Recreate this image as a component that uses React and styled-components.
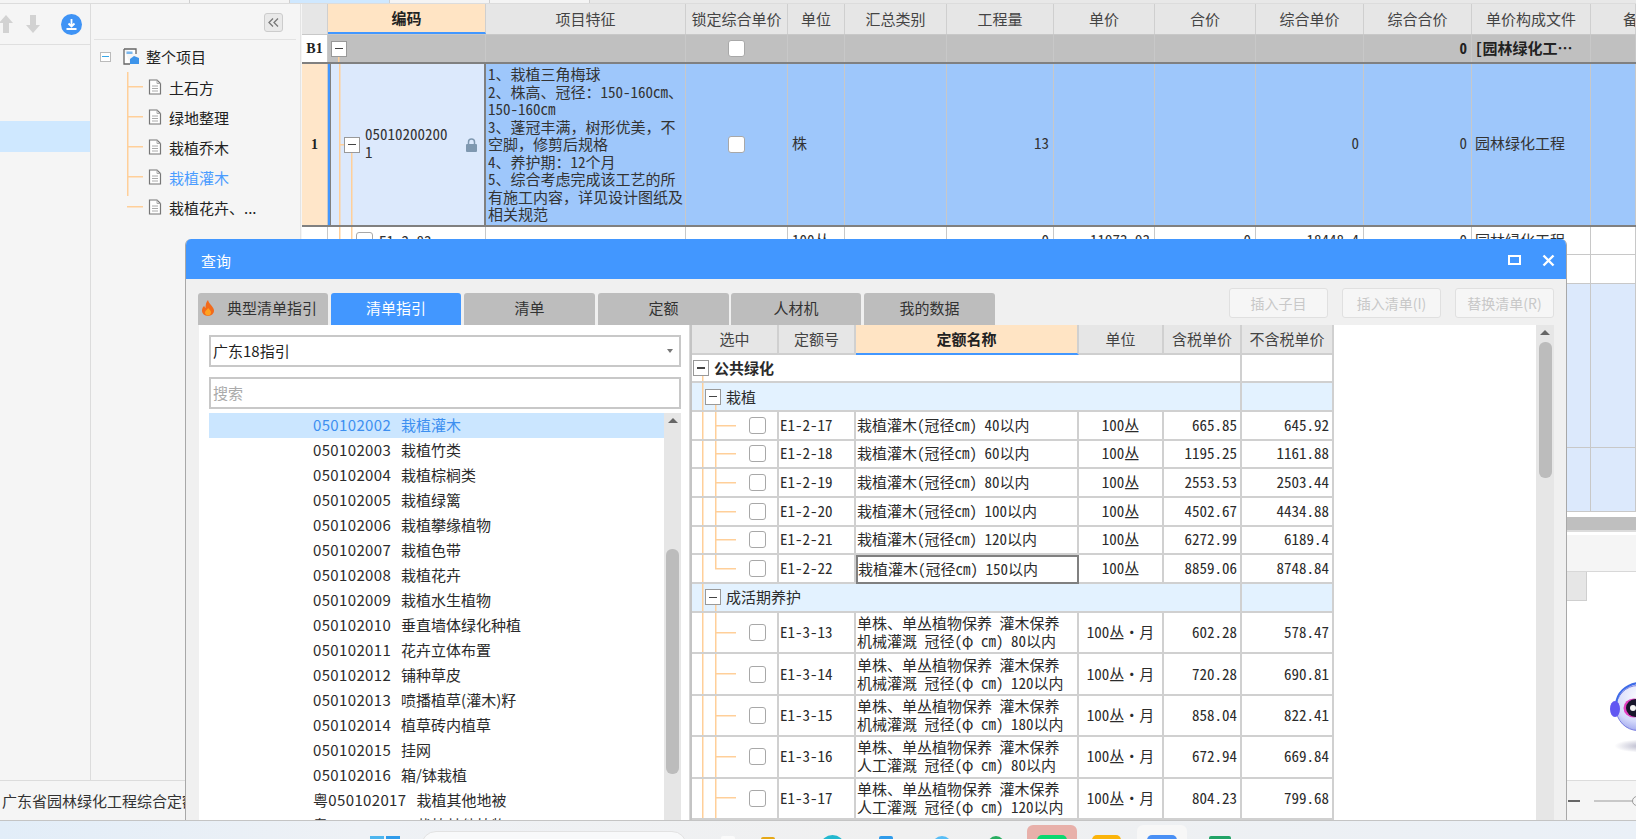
import React from 'react';
import styled, { createGlobalStyle, css } from 'styled-components';

const GlobalStyle = createGlobalStyle`
  html, body {
    margin: 0;
    padding: 0;
    background: #f5f5f5;
  }
  * { box-sizing: border-box; }
`;

const cjk = `"Noto Sans CJK SC", "Liberation Sans", sans-serif`;
const lineOrange = '#ffcf99';

/* the old grids use half-width digits, like SimSun */
const gridText = css`
  font-family: ${cjk};
  font-size: 15px;
  font-feature-settings: "hwid" 1;
  color: #333;
`;

const Page = styled.div`
  position: relative;
  width: 1636px;
  height: 839px;
  overflow: hidden;
  display: flex;
  flex-direction: column;
  font-family: ${cjk};
  background: #f5f5f5;
`;

const TopStrip = styled.div`
  height: 4px;
  display: flex;
  background: #e8e8e8;
  border-bottom: 1px solid #dcdcdc;
`;

const StripTab = styled.div`
  width: ${p => p.$w}px;
  background: ${p => (p.$active ? '#cfe8ff' : '#f4f4f4')};
  border-right: 1px solid #cfcfcf;
`;

const Body = styled.div`
  flex: 1;
  min-height: 0;
  display: flex;
`;

const Sidebar = styled.aside`
  width: 91px;
  border-right: 1px solid #dcdcdc;
  background: #f5f5f5;
`;

const SideTools = styled.div`
  height: 41px;
  display: flex;
  align-items: center;
  border-bottom: 1px solid #dfdfdf;
  margin-bottom: 76px;
`;

const ArrowIcon = styled.svg`
  width: 14px;
  height: 18px;
  margin-left: ${p => p.$ml}px;
  flex: none;
`;

const RoundDown = styled.svg`
  width: 21px;
  height: 21px;
  margin-left: 21px;
  flex: none;
`;

const SideRow = styled.div`
  height: 31px;
  background: #cfe8ff;
`;

const TreePanel = styled.section`
  width: 210px;
  padding: 0 4px 0 3px;
  border-right: 1px solid #e4e4e4;
  background: #f5f5f5;
`;

const TreeHead = styled.div`
  height: 36px;
  padding: 9px 13px 0 0;
  display: flex;
  justify-content: flex-end;
  border-bottom: 1px solid #e2e2e2;
`;

const CollapseBtn = styled.div`
  width: 19px;
  height: 19px;
  display: flex;
  align-items: center;
  justify-content: center;
  border: 1px solid #ccc;
  border-radius: 3px;
  background: #e9e9e9;
`;

const TreeRoot = styled.div`
  height: 31px;
  margin-top: 1px;
  padding-left: 6px;
  display: flex;
  align-items: center;
  font-size: 15px;
  color: #222;
`;

const RootToggle = styled.span`
  width: 11px;
  height: 10px;
  margin-right: 12px;
  display: flex;
  align-items: center;
  justify-content: center;
  border: 1px solid #bbb;
  background: #fff;
  &::before {
    content: '';
    width: 7px;
    height: 1px;
    background: #38a7e8;
  }
`;

const TreeLabel = styled.span`
  margin-left: ${p => p.$ml ?? 7}px;
  white-space: nowrap;
`;

const TreeKids = styled.div`
  margin-left: 33px;
  background: linear-gradient(${lineOrange}, ${lineOrange}) 0 0 / 1.5px 124px no-repeat;
`;

const TreeKid = styled.div`
  height: 30px;
  padding-left: 21px;
  display: flex;
  align-items: center;
  font-size: 15px;
  color: ${p => (p.$active ? '#4a9cff' : '#222')};
  background: linear-gradient(${lineOrange}, ${lineOrange}) 0 50% / 16px 1.5px no-repeat;
`;

const GridArea = styled.main`
  flex: 1;
  min-width: 0;
  padding-left: 1px;
  display: flex;
  flex-direction: column;
  background: #f5f5f5;
`;

const MainRow = styled.div`
  display: grid;
  grid-template-columns: 26px 158px 200px 102px 57px 102px 107px 101px 101px 108px 108px 119px 1fr;
  height: ${p => p.$h}px;
  background: ${p => p.$bg || '#fff'};
  border-bottom: ${p => (p.$strong ? '2px solid #808080' : '1px solid #c8c8c8')};
`;

const MainCell = styled.div`
  ${gridText}
  min-width: 0;
  display: flex;
  align-items: center;
  justify-content: ${p => p.$align || 'flex-start'};
  padding: 0 ${p => p.$pr ?? 4}px ${p => p.$pb ?? 2}px ${p => p.$pl ?? 4}px;
  border-right: 1px solid #c8c8c8;
  white-space: nowrap;
  overflow: hidden;
`;

const HeadCell = styled(MainCell)`
  justify-content: center;
  padding: 0 0 2px;
  background: #e6e6e6;
  color: #444;
  border-right-color: #cfcfcf;
`;

const ActiveHead = styled(HeadCell)`
  background: #ffe4c4;
  color: #222;
  font-weight: 700;
  border-bottom: 2px solid #4297ff;
`;

/* the last column runs off the window, only its first character shows */
const CutHead = styled(HeadCell)`
  justify-content: flex-start;
  padding-left: 32px;
`;

const NumCell = styled(MainCell)`
  justify-content: center;
  padding: 0;
  font-family: "Liberation Serif", serif;
  font-size: 14px;
  font-weight: 700;
  color: #222;
  background: ${p => p.$bg || '#fff'};
`;

const MinusBox = styled.span`
  flex: none;
  width: 16px;
  height: 16px;
  display: flex;
  align-items: center;
  justify-content: center;
  border: 1.5px solid #999;
  background: #fff;
  &::before {
    content: '';
    width: 8px;
    height: 1.5px;
    background: #444;
  }
`;

const Check = styled.span`
  flex: none;
  width: 17px;
  height: 17px;
  border: 1.5px solid #a8a8a8;
  border-radius: 3px;
  background: #fff;
`;

const CenterCell = styled(MainCell)`
  justify-content: center;
  padding: 0;
`;

const BoldEnd = styled(MainCell)`
  font-weight: 700;
  color: #222;
`;

const GroupCode = styled(MainCell)`
  padding: 0 0 0 3px;
  background: linear-gradient(${lineOrange}, ${lineOrange}) 10px 100% / 1.5px 8px no-repeat;
`;

const CodeCell = styled.div`
  ${gridText}
  display: flex;
  align-items: center;
  padding-left: 14px;
  border-left: 2px solid #4297ff;
  border-right: 2px solid #808080;
  box-shadow: inset 1px 0 0 #808080;
  background:
    linear-gradient(${lineOrange}, ${lineOrange}) 9px 0 / 1.5px 100% no-repeat,
    linear-gradient(${lineOrange}, ${lineOrange}) 21px 89px / 1.5px 100% no-repeat,
    linear-gradient(${lineOrange}, ${lineOrange}) 9px 80px / 6px 1.5px no-repeat,
    #dce9fc;
`;

const CodeText = styled.span`
  margin: 0 0 3px 5px;
  width: 84px;
  line-height: 18px;
  word-break: break-all;
`;

const LockIcon = styled.svg`
  width: 11px;
  height: 14px;
  margin-left: 17px;
  flex: none;
`;

const FeatureCell = styled(MainCell)`
  display: block;
  padding: 1px 0 0 2px;
  line-height: 17.55px;
  white-space: pre;
`;

/* commas and colons stay full width inside the half-width grid text */
const Wide = styled.span`
  font-feature-settings: normal;
`;

const SubCode = styled.div`
  ${gridText}
  padding-left: 28px;
  display: flex;
  gap: 6px;
  align-items: center;
  border-right: 1px solid #c8c8c8;
  white-space: nowrap;
  overflow: hidden;
  background:
    linear-gradient(${lineOrange}, ${lineOrange}) 11px 0 / 1.5px 100% no-repeat,
    linear-gradient(${lineOrange}, ${lineOrange}) 23px 0 / 1.5px 100% no-repeat;
`;

const SplitGap = styled.div`
  height: 5px;
  background: #fff;
`;

const SplitBar = styled.div`
  height: 13px;
  background: #bfbfbf;
`;

const SplitEdge = styled.div`
  height: 5px;
  background: #fff;
  border-top: 2px solid #dcdcdc;
`;

const LowerBar = styled.div`
  height: 37px;
  background: #f5f5f5;
  border-bottom: 1px solid #d8d8d8;
`;

const LowerBody = styled.div`
  position: relative;
  flex: 1;
  background: #fff;
  overflow: hidden;
`;

const LowerTab = styled.div`
  width: 110px;
  height: 29px;
  margin-left: 1175px;
  background: #e6e6e6;
  border: 1px solid #cfcfcf;
  border-top: 0;
`;

/* mascot floats over the lower panel, half outside the window */
const Mascot = styled.svg`
  position: absolute;
  left: 1304px;
  top: 110px;
  width: 60px;
  height: 76px;
`;

const StatusBar = styled.footer`
  height: 40px;
  display: flex;
  align-items: center;
  padding-left: 2px;
  background: #f5f5f5;
  border-top: 1px solid #dcdcdc;
  font-size: 15px;
  color: #333;
  white-space: nowrap;
`;

const ZoomSlider = styled.div`
  margin-left: auto;
  display: flex;
  align-items: center;
`;

const ZoomDash = styled.span`
  width: 12px;
  height: 2px;
  background: #666;
`;

const ZoomTrack = styled.span`
  width: 38px;
  height: 2px;
  margin-left: 14px;
  background: #c8c8c8;
`;

const ZoomKnob = styled.span`
  width: 10px;
  height: 10px;
  margin-right: -6px;
  border: 1.5px solid #999;
  border-radius: 50%;
  background: #f5f5f5;
`;

const Taskbar = styled.div`
  position: relative;
  height: 19px;
  display: flex;
  overflow: hidden;
  background: linear-gradient(90deg, #e2edf8 0%, #eef1f5 22%, #f0f0f0 55%, #eaf0f7 100%);
  border-top: 1px solid #c4c4c4;
`;

const TaskIcon = styled.span`
  flex: none;
  width: ${p => p.$w}px;
  height: 20px;
  margin-left: ${p => p.$ml}px;
  margin-top: ${p => p.$mt}px;
  background: ${p => p.$c};
  border-radius: ${p => p.$r || '5px'};
`;

const TaskSlot = styled.span`
  flex: none;
  width: 50px;
  height: 30px;
  margin-left: ${p => p.$ml}px;
  margin-top: 4px;
  padding: 10px 0 0 10px;
  border-radius: 6px;
  background: ${p => p.$bg};
`;

const SlotGlyph = styled.span`
  display: block;
  width: 30px;
  height: 20px;
  border-radius: 5px;
  background: ${p => p.$c};
`;

const SearchPill = styled.span`
  flex: none;
  width: 266px;
  height: 30px;
  margin-left: 21px;
  margin-top: 10px;
  border-radius: 15px;
  background: #f8f9fa;
  border: 1px solid #e2e2e2;
`;

const WinLogo = styled.svg`
  flex: none;
  width: 30px;
  height: 30px;
  margin-left: 370px;
  margin-top: 15px;
`;

/* floating query window */
const Dialog = styled.div`
  position: absolute;
  left: 185px;
  top: 239px;
  width: 1382px;
  height: 581px;
  display: flex;
  flex-direction: column;
  border: 1px solid #a8a8a8;
  border-bottom: 0;
  border-top: 0;
  border-radius: 6px 6px 0 0;
  background: #f0f0f0;
  overflow: hidden;
`;

const TitleBar = styled.div`
  flex: none;
  height: 40px;
  display: flex;
  align-items: center;
  padding: 2px 11px 0 15px;
  background: #4297ff;
  color: #fff;
  font-size: 15px;
`;

const WinButtons = styled.div`
  margin-left: auto;
  display: flex;
  align-items: center;
  gap: 21px;
`;

const MaxBtn = styled.span`
  width: 13px;
  height: 10px;
  border: 2.5px solid #fff;
`;

const CloseBtn = styled.svg`
  width: 13px;
  height: 13px;
`;

const ToolRow = styled.div`
  flex: none;
  height: 46px;
  display: flex;
  align-items: flex-end;
  padding: 0 12px 0 12px;
`;

const Tab = styled.div`
  width: ${p => p.$w || 130}px;
  height: 32px;
  margin-right: ${p => p.$mr ?? 3}px;
  display: flex;
  align-items: center;
  justify-content: center;
  gap: ${p => p.$gap ?? 14}px;
  padding: 0 ${p => p.$pr ?? 0}px 3px 0;
  border-radius: 3px 3px 0 0;
  font-size: 15px;
  background: ${p => (p.$active ? '#4297ff' : '#bdbdbd')};
  color: ${p => (p.$active ? '#fff' : '#333')};
`;

const ToolButtons = styled.div`
  margin-left: auto;
  align-self: flex-start;
  margin-top: 9px;
  display: flex;
  gap: 14px;
`;

const GhostBtn = styled.div`
  width: 99px;
  height: 30px;
  display: flex;
  align-items: center;
  justify-content: center;
  padding-bottom: 1px;
  border: 1px solid #e0e0e0;
  border-radius: 3px;
  background: #f6f6f6;
  color: #c8c8c8;
  font-size: 14px;
`;

const Panes = styled.div`
  flex: 1;
  min-height: 0;
  display: flex;
  padding: 0 12px 0 13px;
`;

const LeftPane = styled.div`
  width: 491px;
  display: flex;
  flex-direction: column;
  padding: 10px 8px 0 10px;
  background: #fff;
  border-right: 1px solid #d8d8d8;
`;

const boxField = css`
  height: 32px;
  display: flex;
  align-items: center;
  padding: 0 3px 2px 2px;
  border: 2px solid #c8c8c8;
  background: #fff;
  font-size: 15px;
`;

const SelectBox = styled.div`
  ${boxField}
  color: #222;
  justify-content: space-between;
  &::after {
    content: '';
    margin: 2px 3px 0 0;
    border: 3.5px solid transparent;
    border-top: 4px solid #777;
    border-bottom: 0;
  }
`;

const SearchBox = styled.div`
  ${boxField}
  margin-top: 10px;
  color: #aaa;
`;

const ListWrap = styled.div`
  flex: 1;
  min-height: 0;
  margin-top: 4px;
  display: flex;
`;

const List = styled.div`
  flex: 1;
  min-width: 0;
  overflow: hidden;
`;

const ListRow = styled.div`
  height: 25px;
  padding: 0 0 2px 104px;
  display: flex;
  align-items: center;
  font-size: 15px;
  white-space: nowrap;
  color: ${p => (p.$active ? '#3d8ff0' : '#2b2b2b')};
  background: ${p => (p.$active ? '#cbe6ff' : 'transparent')};
`;

const ListCode = styled.span`
  letter-spacing: 0.35px;
  margin-right: 10px;
`;

const ScrollTrack = styled.div`
  flex: none;
  width: ${p => p.$w}px;
  display: flex;
  flex-direction: column;
  align-items: center;
  background: #e6e6e6;
  &::before {
    content: '';
    margin-top: 5px;
    border: 5px solid transparent;
    border-bottom: 5px solid #666;
    border-top: 0;
  }
`;

const ScrollThumb = styled.div`
  width: ${p => p.$w}px;
  height: ${p => p.$h}px;
  margin-top: ${p => p.$mt}px;
  border-radius: 6px;
  background: #bcbcbc;
`;

const RightPane = styled.div`
  flex: 1;
  min-width: 0;
  display: flex;
  background: #fff;
`;

const RateTable = styled.div`
  width: 644px;
  border-left: 2px solid #c4c4c4;
`;

const RateRow = styled.div`
  display: grid;
  grid-template-columns: 87px 77px 223px 85px 78px 92px;
  height: ${p => p.$h}px;
  background: ${p => p.$bg || '#fff'};
`;

const RateCell = styled.div`
  ${gridText}
  min-width: 0;
  display: flex;
  align-items: center;
  justify-content: ${p => p.$align || 'flex-start'};
  padding: ${p => p.$pad || '0 3px 1px'};
  border-right: 2px solid #d0d0d0;
  border-bottom: 2px solid #d0d0d0;
  line-height: 18px;
  white-space: pre;
  color: #2b2b2b;
`;

const RateHead = styled(RateCell)`
  justify-content: center;
  background: ${p => (p.$active ? '#ffe4c4' : '#e6e6e6')};
  font-weight: ${p => (p.$active ? 700 : 400)};
  border-bottom: 2px solid ${p => (p.$active ? '#4297ff' : '#cfcfcf')};
  color: ${p => (p.$active ? '#222' : '#444')};
`;

const NameCell = styled(RateCell)`
  padding-left: 1px;
  ${p => p.$focus && css`
    border: 2px solid #808080;
    padding-left: 0;
  `}
`;

const GroupCell = styled(RateCell)`
  grid-column: 1 / 6;
  gap: 5px;
  padding: 0 0 0 ${p => p.$indent}px;
  font-weight: ${p => (p.$top ? 700 : 400)};
  background: ${p => (p.$top
    ? `linear-gradient(${lineOrange}, ${lineOrange}) 10px 100% / 1.5px 8px no-repeat`
    : `linear-gradient(${lineOrange}, ${lineOrange}) 10px 0 / 1.5px 100% no-repeat,
       linear-gradient(${lineOrange}, ${lineOrange}) 23px 100% / 1.5px 7px no-repeat`)};
`;

const TreeCheckCell = styled(RateCell)`
  padding: 0 0 0 57px;
  background:
    linear-gradient(${lineOrange}, ${lineOrange}) 10px 0 / 1.5px 100% no-repeat,
    linear-gradient(${lineOrange}, ${lineOrange}) 23px 0 / 1.5px ${p => (p.$last ? '50%' : '100%')} no-repeat,
    linear-gradient(${lineOrange}, ${lineOrange}) 23px 50% / 21px 1.5px no-repeat;
`;

const CodeRateCell = styled(RateCell)`
  padding-left: 1px;
`;

const PaneFill = styled.div`
  flex: 1;
`;

const MAIN_HEADS = ['项目特征', '锁定综合单价', '单位', '汇总类别', '工程量', '单价', '合价', '综合单价', '综合合价', '单价构成文件'];

const FEATURES = `1、栽植三角梅球
2、株高、冠径：150-160cm、
150-160cm
3、蓬冠丰满，树形优美，不
空脚，修剪后规格
4、养护期：12个月
5、综合考虑完成该工艺的所
有施工内容，详见设计图纸及
相关规范`;

const widePunct = text => text.split(/([，：])/).map((part, i) => (
  part === '，' || part === '：' ? <Wide key={i}>{part}</Wide> : part
));

const LIST = [
  ['050102002', '栽植灌木'],
  ['050102003', '栽植竹类'],
  ['050102004', '栽植棕榈类'],
  ['050102005', '栽植绿篱'],
  ['050102006', '栽植攀缘植物'],
  ['050102007', '栽植色带'],
  ['050102008', '栽植花卉'],
  ['050102009', '栽植水生植物'],
  ['050102010', '垂直墙体绿化种植'],
  ['050102011', '花卉立体布置'],
  ['050102012', '铺种草皮'],
  ['050102013', '喷播植草(灌木)籽'],
  ['050102014', '植草砖内植草'],
  ['050102015', '挂网'],
  ['050102016', '箱/钵栽植'],
  ['粤050102017', '栽植其他地被'],
  ['粤050102018', '栽植其他植物'],
];

const PLANTING = [
  ['E1-2-17', '栽植灌木(冠径cm) 40以内', '665.85', '645.92'],
  ['E1-2-18', '栽植灌木(冠径cm) 60以内', '1195.25', '1161.88'],
  ['E1-2-19', '栽植灌木(冠径cm) 80以内', '2553.53', '2503.44'],
  ['E1-2-20', '栽植灌木(冠径cm) 100以内', '4502.67', '4434.88'],
  ['E1-2-21', '栽植灌木(冠径cm) 120以内', '6272.99', '6189.4'],
  ['E1-2-22', '栽植灌木(冠径cm) 150以内', '8859.06', '8748.84'],
];

const CARE = [
  ['E1-3-13', '机械灌溉', '80以内', '602.28', '578.47'],
  ['E1-3-14', '机械灌溉', '120以内', '720.28', '690.81'],
  ['E1-3-15', '机械灌溉', '180以内', '858.04', '822.41'],
  ['E1-3-16', '人工灌溉', '80以内', '672.94', '669.84'],
  ['E1-3-17', '人工灌溉', '120以内', '804.23', '799.68'],
];

const FileIcon = () => (
  <svg width="14" height="16" viewBox="0 0 14 16" style={{ flex: 'none' }}>
    <path d="M1.5 1h7.5l3.5 3.5V15h-11z" fill="#fff" stroke="#777" strokeWidth="1.2" />
    <path d="M9 1v3.5h3.5M4 7h6M4 9.5h6M4 12h6" fill="none" stroke="#aaa" />
  </svg>
);

const RootIcon = () => (
  <svg width="17" height="17" viewBox="0 0 17 17" style={{ flex: 'none' }}>
    <path d="M1 1h12v5M1 1v15h6" fill="#fff" stroke="#666" strokeWidth="1.3" />
    <rect x="3.5" y="3.5" width="6" height="2.5" fill="#7ab8ef" />
    <path d="M7 16v-5l4-3 5 2v6z" fill="#3d94ea" />
  </svg>
);

const Flame = () => (
  <svg width="12" height="16" viewBox="0 0 12 16">
    <path d="M6 0c.6 2.6 2 3.6 3.4 5.5C11 7.500 12 9 12 10.600 12 13.800 9.400 16 6 16S0 13.800 0 10.600c0-2 1-3.600 2.200-4.800.2 1 .6 1.800 1.400 2.200C3.400 5.200 4 2.400 6 0z" fill="#f26a1b" />
    <path d="M6.200 8c.8 1.400 2.800 2.400 2.800 4.400C9 14.200 7.600 15.400 6 15.400s-3-1.200-3-2.900C3 10.800 5.200 10 6.200 8z" fill="#ffa21f" />
  </svg>
);

const Robot = () => (
  <Mascot viewBox="0 0 60 76">
    <defs>
      <radialGradient id="head" cx="0.5" cy="0.25" r="0.85">
        <stop offset="0" stopColor="#fbfbff" />
        <stop offset="0.65" stopColor="#d3d8fa" />
        <stop offset="1" stopColor="#8f97ea" />
      </radialGradient>
      <radialGradient id="shade" cx="0.6" cy="0.5" r="0.55">
        <stop offset="0" stopColor="#b9b9cc" />
        <stop offset="1" stopColor="#ffffff" />
      </radialGradient>
    </defs>
    <ellipse cx="30" cy="64" rx="24" ry="6" fill="url(#shade)" />
    <ellipse cx="32" cy="26" rx="22" ry="22.500" fill="url(#head)" stroke="#6d72dc" strokeWidth="0.9" />
    <path d="M10 22C11 11 19 3 32 1" fill="none" stroke="#3d6be8" strokeWidth="2" />
    <ellipse cx="9" cy="27" rx="5" ry="8" fill="#6157f2" />
    <ellipse cx="28" cy="26" rx="10.500" ry="9.500" fill="#e23fc0" />
    <ellipse cx="29.500" cy="26" rx="9.500" ry="9" fill="#17152b" />
    <circle cx="27" cy="26" r="3" fill="#f4f4f4" />
  </Mascot>
);

const EmptyCells = ({ count }) => Array.from({ length: count }, (_, i) => <MainCell key={i} />);

const App = () => (
  <Page>
    <GlobalStyle />
    <TopStrip>
      <StripTab $w={190} />
      <StripTab $w={100} />
      <StripTab $w={100} $active />
      <StripTab $w={100} />
      <StripTab $w={100} />
    </TopStrip>

    <Body>
      <Sidebar>
        <SideTools>
          <ArrowIcon $ml={-1} viewBox="0 0 14 18"><path d="M7 0l7 8h-4v10H4V8H0z" fill="#d2d2d2" /></ArrowIcon>
          <ArrowIcon $ml={13} viewBox="0 0 14 18"><path d="M7 18l7-8h-4V0H4v10H0z" fill="#d2d2d2" /></ArrowIcon>
          <RoundDown viewBox="0 0 21 21">
            <circle cx="10.500" cy="10.500" r="10.500" fill="#3f93f5" />
            <path d="M10.500 5v7M7.500 9.500l3 3 3-3M5.500 15h10" fill="none" stroke="#fff" strokeWidth="1.800" />
          </RoundDown>
        </SideTools>
        <SideRow />
      </Sidebar>

      <TreePanel>
        <TreeHead>
          <CollapseBtn>
            <svg width="11" height="9" viewBox="0 0 11 9">
              <path d="M5 .5L1 4.500l4 4M10 .5L6 4.500l4 4" fill="none" stroke="#777" strokeWidth="1.300" />
            </svg>
          </CollapseBtn>
        </TreeHead>
        <TreeRoot>
          <RootToggle />
          <RootIcon />
          <TreeLabel $ml={6}>整个项目</TreeLabel>
        </TreeRoot>
        <TreeKids>
          <TreeKid><FileIcon /><TreeLabel>土石方</TreeLabel></TreeKid>
          <TreeKid><FileIcon /><TreeLabel>绿地整理</TreeLabel></TreeKid>
          <TreeKid><FileIcon /><TreeLabel>栽植乔木</TreeLabel></TreeKid>
          <TreeKid $active><FileIcon /><TreeLabel>栽植灌木</TreeLabel></TreeKid>
          <TreeKid><FileIcon /><TreeLabel>栽植花卉、...</TreeLabel></TreeKid>
        </TreeKids>
      </TreePanel>

      <GridArea>
        <MainRow $h={31} $bg="#e6e6e6">
          <HeadCell />
          <ActiveHead>编码</ActiveHead>
          {MAIN_HEADS.map(h => <HeadCell key={h}>{h}</HeadCell>)}
          <CutHead>备注</CutHead>
        </MainRow>

        <MainRow $h={29} $bg="#c0c0c0" $strong>
          <NumCell>B1</NumCell>
          <GroupCode><MinusBox /></GroupCode>
          <MainCell />
          <CenterCell><Check /></CenterCell>
          <EmptyCells count={6} />
          <BoldEnd $align="flex-end">0</BoldEnd>
          <BoldEnd $pl={3}>[园林绿化工…</BoldEnd>
          <MainCell />
        </MainRow>

        <MainRow $h={163} $bg="#9ec7fb" $strong>
          <NumCell $bg="#ffe6c9">1</NumCell>
          <CodeCell>
            <MinusBox />
            <CodeText>050102002001</CodeText>
            <LockIcon viewBox="0 0 11 14">
              <path d="M2.500 6V4a3 3 0 0 1 6 0v2" fill="none" stroke="#7f98b0" strokeWidth="1.500" />
              <rect y="6" width="11" height="8" rx="1" fill="#7f98b0" />
            </LockIcon>
          </CodeCell>
          <FeatureCell>{widePunct(FEATURES)}</FeatureCell>
          <CenterCell><Check /></CenterCell>
          <MainCell $pb={4}>株</MainCell>
          <MainCell />
          <MainCell $align="flex-end" $pb={4}>13</MainCell>
          <EmptyCells count={2} />
          <MainCell $align="flex-end" $pb={4}>0</MainCell>
          <MainCell $align="flex-end" $pb={4}>0</MainCell>
          <MainCell $pl={3} $pb={4}>园林绿化工程</MainCell>
          <MainCell />
        </MainRow>

        <MainRow $h={28}>
          <MainCell />
          <SubCode><Check />E1-2-83</SubCode>
          <EmptyCells count={2} />
          <MainCell>100丛</MainCell>
          <MainCell />
          <MainCell $align="flex-end">0</MainCell>
          <MainCell $align="flex-end">11973.93</MainCell>
          <MainCell $align="flex-end">0</MainCell>
          <MainCell $align="flex-end">18448.4</MainCell>
          <MainCell $align="flex-end">0</MainCell>
          <MainCell $pl={3}>园林绿化工程</MainCell>
          <MainCell />
        </MainRow>
        <MainRow $h={29}><EmptyCells count={13} /></MainRow>
        <MainRow $h={164} $bg="#dce9fc"><EmptyCells count={13} /></MainRow>
        <MainRow $h={64} $bg="#dce9fc"><EmptyCells count={13} /></MainRow>

        <SplitGap />
        <SplitBar />
        <SplitEdge />
        <LowerBar />
        <LowerBody>
          <LowerTab />
          <Robot />
        </LowerBody>
      </GridArea>
    </Body>

    <StatusBar>
      广东省园林绿化工程综合定额2018
      <ZoomSlider>
        <ZoomDash />
        <ZoomTrack />
        <ZoomKnob />
      </ZoomSlider>
    </StatusBar>

    <Taskbar>
      <WinLogo viewBox="0 0 30 30">
        <rect width="14" height="14" fill="#4db5ee" />
        <rect x="16" width="14" height="14" fill="#2f9bea" />
      </WinLogo>
      <SearchPill />
      <TaskIcon $w={14} $ml={34} $mt={15} $c="#fafafa" $r="2px" />
      <TaskIcon $w={14} $ml={26} $mt={16} $c="#e6a817" $r="2px" />
      <TaskIcon $w={23} $ml={46} $mt={14} $c="#22b8cf" $r="50%" />
      <TaskIcon $w={14} $ml={35} $mt={15} $c="#2f9bea" $r="2px" />
      <TaskIcon $w={20} $ml={39} $mt={15} $c="#58bdf5" $r="50%" />
      <TaskIcon $w={18} $ml={35} $mt={15} $c="#27ae60" $r="50%" />
      <TaskSlot $ml={22} $bg="#e8b0aa"><SlotGlyph $c="#0bd86f" /></TaskSlot>
      <TaskIcon $w={29} $ml={15} $mt={14} $c="#fbb40a" />
      <TaskSlot $ml={16} $bg="#f7f7f7"><SlotGlyph $c="#4a90f5" /></TaskSlot>
      <TaskIcon $w={22} $ml={22} $mt={15} $c="#21a366" $r="2px" />
    </Taskbar>

    <Dialog>
      <TitleBar>
        查询
        <WinButtons>
          <MaxBtn />
          <CloseBtn viewBox="0 0 13 13">
            <path d="M1.500 1.500l10 10M11.500 1.500l-10 10" stroke="#fff" strokeWidth="2.400" />
          </CloseBtn>
        </WinButtons>
      </TitleBar>

      <ToolRow>
        <Tab $pr={7} $gap={13}><Flame />典型清单指引</Tab>
        <Tab $active>清单指引</Tab>
        <Tab $w={131}>清单</Tab>
        <Tab $w={131} $mr={2}>定额</Tab>
        <Tab>人材机</Tab>
        <Tab $w={131}>我的数据</Tab>
        <ToolButtons>
          <GhostBtn>插入子目</GhostBtn>
          <GhostBtn>插入清单(I)</GhostBtn>
          <GhostBtn>替换清单(R)</GhostBtn>
        </ToolButtons>
      </ToolRow>

      <Panes>
        <LeftPane>
          <SelectBox>广东18指引</SelectBox>
          <SearchBox>搜索</SearchBox>
          <ListWrap>
            <List>
              {LIST.map(([code, name], i) => (
                <ListRow key={code} $active={i === 0}>
                  <ListCode>{code}</ListCode>{name}
                </ListRow>
              ))}
            </List>
            <ScrollTrack $w={17}>
              <ScrollThumb $w={13} $h={225} $mt={126} />
            </ScrollTrack>
          </ListWrap>
        </LeftPane>

        <RightPane>
          <RateTable>
            <RateRow $h={30}>
              <RateHead>选中</RateHead>
              <RateHead>定额号</RateHead>
              <RateHead $active>定额名称</RateHead>
              <RateHead>单位</RateHead>
              <RateHead>含税单价</RateHead>
              <RateHead>不含税单价</RateHead>
            </RateRow>
            <RateRow $h={28}>
              <GroupCell $top $indent={1}><MinusBox />公共绿化</GroupCell>
              <RateCell />
            </RateRow>
            <RateRow $h={29} $bg="#e3f2ff">
              <GroupCell $indent={13}><MinusBox />栽植</GroupCell>
              <RateCell />
            </RateRow>
            {PLANTING.map(([code, name, tax, net], i) => (
              <RateRow key={code} $h={28.67}>
                <TreeCheckCell $last={i === PLANTING.length - 1}><Check /></TreeCheckCell>
                <CodeRateCell>{code}</CodeRateCell>
                <NameCell $focus={i === PLANTING.length - 1}>{name}</NameCell>
                <RateCell $align="center">100丛</RateCell>
                <RateCell $align="flex-end">{tax}</RateCell>
                <RateCell $align="flex-end">{net}</RateCell>
              </RateRow>
            ))}
            <RateRow $h={29} $bg="#e3f2ff">
              <GroupCell $indent={13}><MinusBox />成活期养护</GroupCell>
              <RateCell />
            </RateRow>
            {CARE.map(([code, way, size, tax, net]) => (
              <RateRow key={code} $h={41.4}>
                <TreeCheckCell><Check /></TreeCheckCell>
                <CodeRateCell>{code}</CodeRateCell>
                <NameCell>{`单株、单丛植物保养 灌木保养\n${way} 冠径(φ cm) ${size}`}</NameCell>
                <RateCell $align="center">100丛・月</RateCell>
                <RateCell $align="flex-end">{tax}</RateCell>
                <RateCell $align="flex-end">{net}</RateCell>
              </RateRow>
            ))}
          </RateTable>
          <PaneFill />
          <ScrollTrack $w={18}>
            <ScrollThumb $w={13} $h={136} $mt={7} />
          </ScrollTrack>
        </RightPane>
      </Panes>
    </Dialog>
  </Page>
);

export default App;
